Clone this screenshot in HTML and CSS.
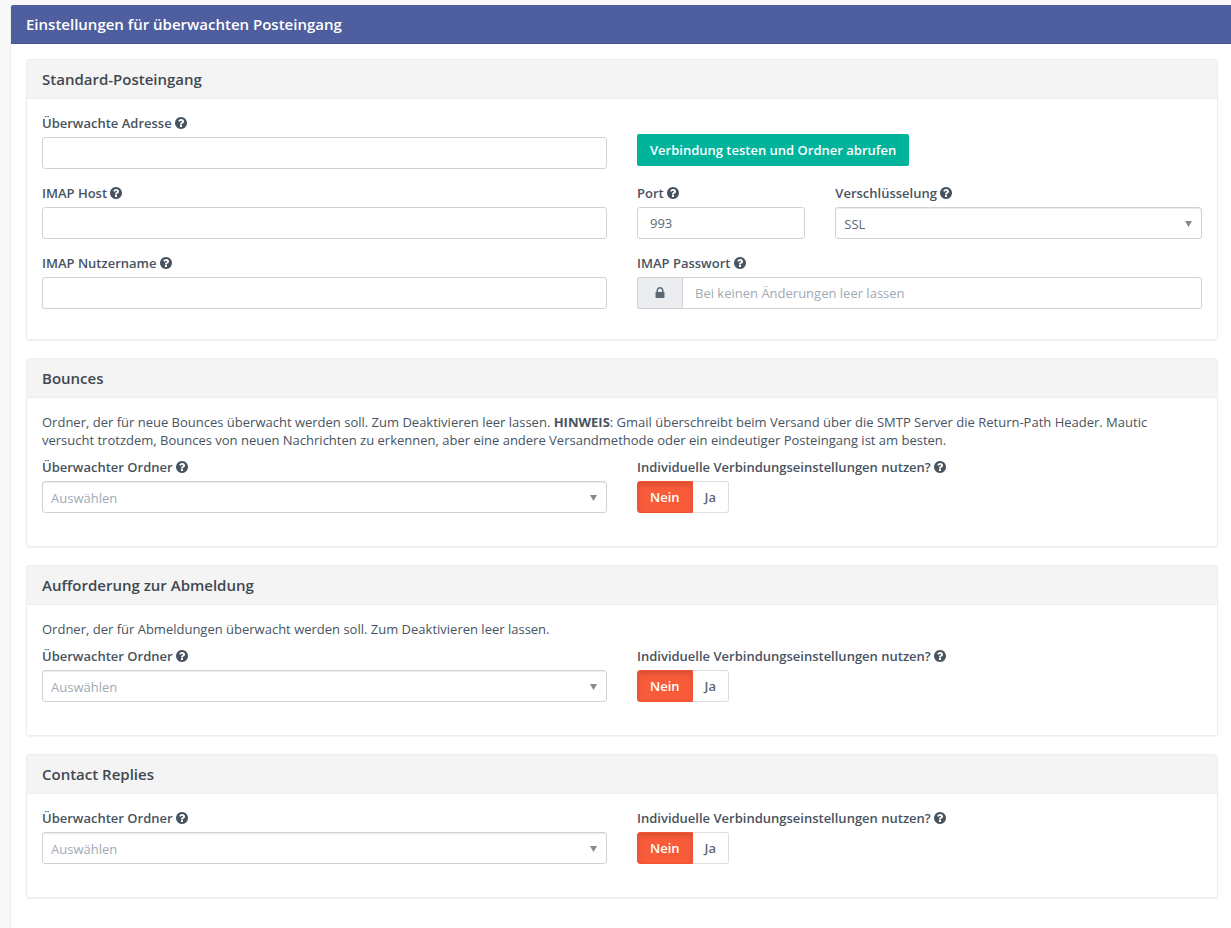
FILE: index.html
```html
<!DOCTYPE html>
<html lang="de">
<head>
<meta charset="utf-8">
<meta name="viewport" content="width=device-width, initial-scale=1">
<title>Einstellungen für überwachten Posteingang</title>
<link rel="stylesheet" href="styles.css">
</head>
<body>
<svg class="sprite" aria-hidden="true">
  <symbol id="help" viewBox="128 128 1536 1536"><path d="M1024 1376v-192q0-14-9-23t-23-9h-192q-14 0-23 9t-9 23v192q0 14 9 23t23 9h192q14 0 23-9t9-23zm256-672q0-88-55.5-163t-138.5-116-170-41q-243 0-371 213-15 24 8 42l132 100q7 6 19 6 16 0 25-12 53-68 86-92 34-24 86-24 48 0 85.5 26t37.5 59q0 38-20 61t-68 45q-63 28-115.5 86.500t-52.500 125.500v36q0 14 9 23t23 9h192q14 0 23-9t9-23q0-19 21.500-49.500t54.500-49.500q32-18 49-28.500t46-35 44.500-48 28-60.500 12.500-81zm384 192q0 209-103 385.500t-279.500 279.500-385.500 103-385.500-103-279.500-279.500-103-385.500 103-385.500 279.500-279.500 385.500-103 385.500 103 279.500 279.500 103 385.500z"/></symbol>
  <symbol id="lock" viewBox="0 0 1792 1792"><path d="M640 768h512v-192q0-106-75-181t-181-75-181 75-75 181v192zm832 96v576q0 40-28 68t-68 28h-960q-40 0-68-28t-28-68v-576q0-40 28-68t68-28h32v-192q0-184 132-316t316-132 316 132 132 316v192h32q40 0 68 28t28 68z"/></symbol>
  <symbol id="caret" viewBox="0 0 7 6"><path d="M0 0h7L3.500 6z"/></symbol>
</svg>
<main class="settings">
  <h1 class="settings-title">Einstellungen für überwachten Posteingang</h1>
  <form class="settings-body">
    <section class="panel">
      <h2 class="panel-title">Standard-Posteingang</h2>
      <div class="panel-body">
        <div class="row">
          <div class="field">
            <label class="label" for="address">Überwachte Adresse <svg class="help"><use href="#help"/></svg></label>
            <input class="control" id="address" type="text">
          </div>
          <div class="action"><button class="test-button" type="button">Verbindung testen und Ordner abrufen</button></div>
        </div>
        <div class="row">
          <div class="field">
            <label class="label" for="host">IMAP Host <svg class="help"><use href="#help"/></svg></label>
            <input class="control" id="host" type="text">
          </div>
          <div class="thirds">
            <div class="field">
              <label class="label" for="port">Port <svg class="help"><use href="#help"/></svg></label>
              <input class="control" id="port" type="text" value="993">
            </div>
            <div class="field wide">
              <label class="label" for="encryption">Verschlüsselung <svg class="help"><use href="#help"/></svg></label>
              <div class="select">
                <select class="control select-control" id="encryption"><option>SSL</option></select>
                <svg class="caret"><use href="#caret"/></svg>
              </div>
            </div>
          </div>
        </div>
        <div class="row">
          <div class="field">
            <label class="label" for="user">IMAP Nutzername <svg class="help"><use href="#help"/></svg></label>
            <input class="control" id="user" type="text">
          </div>
          <div class="field">
            <label class="label" for="password">IMAP Passwort <svg class="help"><use href="#help"/></svg></label>
            <div class="input-group">
              <span class="addon"><svg class="lock"><use href="#lock"/></svg></span>
              <input class="control" id="password" type="password" placeholder="Bei keinen Änderungen leer lassen">
            </div>
          </div>
        </div>
      </div>
    </section>

    <section class="panel">
      <h2 class="panel-title">Bounces</h2>
      <div class="panel-body">
        <p class="hint">Ordner, der für neue Bounces überwacht werden soll. Zum Deaktivieren leer lassen. <strong>HINWEIS</strong>: Gmail überschreibt beim Versand über die SMTP Server die Return-Path Header. Mautic versucht trotzdem, Bounces von neuen Nachrichten zu erkennen, aber eine andere Versandmethode oder ein eindeutiger Posteingang ist am besten.</p>
        <div class="row folder-row">
          <div class="field">
            <label class="label" for="bounce-folder">Überwachter Ordner <svg class="help"><use href="#help"/></svg></label>
            <div class="select">
              <select class="control select-control empty" id="bounce-folder"><option>Auswählen</option></select>
              <svg class="caret"><use href="#caret"/></svg>
            </div>
          </div>
          <div class="field" role="radiogroup" aria-labelledby="bounce-custom">
            <span class="label" id="bounce-custom">Individuelle Verbindungseinstellungen nutzen? <svg class="help"><use href="#help"/></svg></span>
            <div class="toggle">
              <label class="option no"><input type="radio" name="bounce" checked>Nein</label>
              <label class="option"><input type="radio" name="bounce">Ja</label>
            </div>
          </div>
        </div>
      </div>
    </section>

    <section class="panel">
      <h2 class="panel-title">Aufforderung zur Abmeldung</h2>
      <div class="panel-body">
        <p class="hint">Ordner, der für Abmeldungen überwacht werden soll. Zum Deaktivieren leer lassen.</p>
        <div class="row folder-row">
          <div class="field">
            <label class="label" for="unsubscribe-folder">Überwachter Ordner <svg class="help"><use href="#help"/></svg></label>
            <div class="select">
              <select class="control select-control empty" id="unsubscribe-folder"><option>Auswählen</option></select>
              <svg class="caret"><use href="#caret"/></svg>
            </div>
          </div>
          <div class="field" role="radiogroup" aria-labelledby="unsubscribe-custom">
            <span class="label" id="unsubscribe-custom">Individuelle Verbindungseinstellungen nutzen? <svg class="help"><use href="#help"/></svg></span>
            <div class="toggle">
              <label class="option no"><input type="radio" name="unsubscribe" checked>Nein</label>
              <label class="option"><input type="radio" name="unsubscribe">Ja</label>
            </div>
          </div>
        </div>
      </div>
    </section>

    <section class="panel">
      <h2 class="panel-title">Contact Replies</h2>
      <div class="panel-body">
        <div class="row folder-row">
          <div class="field">
            <label class="label" for="reply-folder">Überwachter Ordner <svg class="help"><use href="#help"/></svg></label>
            <div class="select">
              <select class="control select-control empty" id="reply-folder"><option>Auswählen</option></select>
              <svg class="caret"><use href="#caret"/></svg>
            </div>
          </div>
          <div class="field" role="radiogroup" aria-labelledby="reply-custom">
            <span class="label" id="reply-custom">Individuelle Verbindungseinstellungen nutzen? <svg class="help"><use href="#help"/></svg></span>
            <div class="toggle">
              <label class="option no"><input type="radio" name="reply" checked>Nein</label>
              <label class="option"><input type="radio" name="reply">Ja</label>
            </div>
          </div>
        </div>
      </div>
    </section>
  </form>
</main>
</body>
</html>
```
FILE: styles.css
```css
*, *::before, *::after { box-sizing: border-box; }

body {
  margin: 0;
  min-height: 100vh;
  display: flex;
  padding: 5px 0 0 10px;
  background: #f8f8f8;
  color: #47535f;
  font: 13px/18px "Open Sans", "Noto Sans", sans-serif;
}

h1, h2, p { margin: 0; }

svg { fill: currentColor; }

.sprite { position: absolute; width: 0; height: 0; }

.settings {
  flex: 1;
  min-width: 0;
  background: #fff;
  border-left: 1px solid #ebebec;
  border-top-left-radius: 3px;
}

.settings-title {
  padding: 0 15px;
  background: #4e5e9e;
  border-bottom: 1px solid #46558f;
  border-top-left-radius: 2px;
  color: #fff;
  font-size: 15px;
  font-weight: 600;
  line-height: 38px;
}

.settings-body {
  display: flex;
  flex-direction: column;
  gap: 18px;
  padding: 15px 13px 15px 15px;
}

.panel {
  border: 1px solid #ebedf0;
  border-radius: 3px;
  box-shadow: 0 1px 1px rgba(0, 0, 0, 0.05);
}

.panel-title {
  padding: 0 15px;
  background: #f4f4f4;
  border-bottom: 1px solid #ebedf0;
  color: #3f4850;
  font-size: 15px;
  font-weight: 600;
  line-height: 38px;
}

.panel-body { padding: 15px; }

.row {
  display: grid;
  grid-template-columns: 1fr 1fr;
  gap: 30px;
  align-items: start;
  padding-bottom: 15px;
}

.folder-row { padding-bottom: 18px; }

.thirds {
  display: grid;
  grid-template-columns: repeat(3, 1fr);
  gap: 30px;
}

.wide { grid-column: span 2; }

.field { min-width: 0; }

.label {
  display: block;
  margin-bottom: 5px;
  font-weight: 600;
}

.help {
  width: 12px;
  height: 12px;
  vertical-align: -1px;
}

.control {
  display: block;
  width: 100%;
  height: 32px;
  padding: 0 12px;
  border: 1px solid #d0d2d5;
  border-radius: 3px;
  background: #fff;
  color: #5d6876;
  font: inherit;
}

.control::placeholder { color: #a0aab5; opacity: 1; }

.select { position: relative; }

.select-control {
  appearance: none;
  padding: 2px 24px 0 8px;
  box-shadow: inset 0 1px 1px rgba(0, 0, 0, 0.08);
}

.empty { color: #a0aab5; }

.caret {
  position: absolute;
  top: 14px;
  right: 10px;
  width: 7px;
  height: 6px;
  color: #888;
  pointer-events: none;
}

.action { padding-top: 20px; }

.test-button {
  height: 32px;
  padding: 0 13px;
  border: 0;
  border-radius: 2px;
  background: #00b49c;
  color: #fff;
  font: inherit;
  font-weight: 600;
}

.input-group { display: flex; }

.addon {
  flex: none;
  display: grid;
  place-items: center;
  width: 45px;
  border: 1px solid #d0d2d5;
  border-right: 0;
  border-radius: 3px 0 0 3px;
  background: #ebedf0;
  color: #5d6876;
}

.input-group .control { border-radius: 0 3px 3px 0; }

.lock { width: 14px; height: 14px; }

.hint { margin-bottom: 9px; }

.toggle { display: flex; }

.option {
  height: 32px;
  padding: 0 12px;
  border: 1px solid #dcdee0;
  border-left: 0;
  border-radius: 0 3px 3px 0;
  color: #5d6876;
  font-weight: 600;
  line-height: 30px;
}

.option input {
  position: absolute;
  opacity: 0;
  pointer-events: none;
}

.option.no {
  border: 1px solid #f4532f;
  border-radius: 3px 0 0 3px;
  background: #f85b3a;
  box-shadow: inset 0 3px 5px rgba(0, 0, 0, 0.125);
  color: #fff;
}
```
